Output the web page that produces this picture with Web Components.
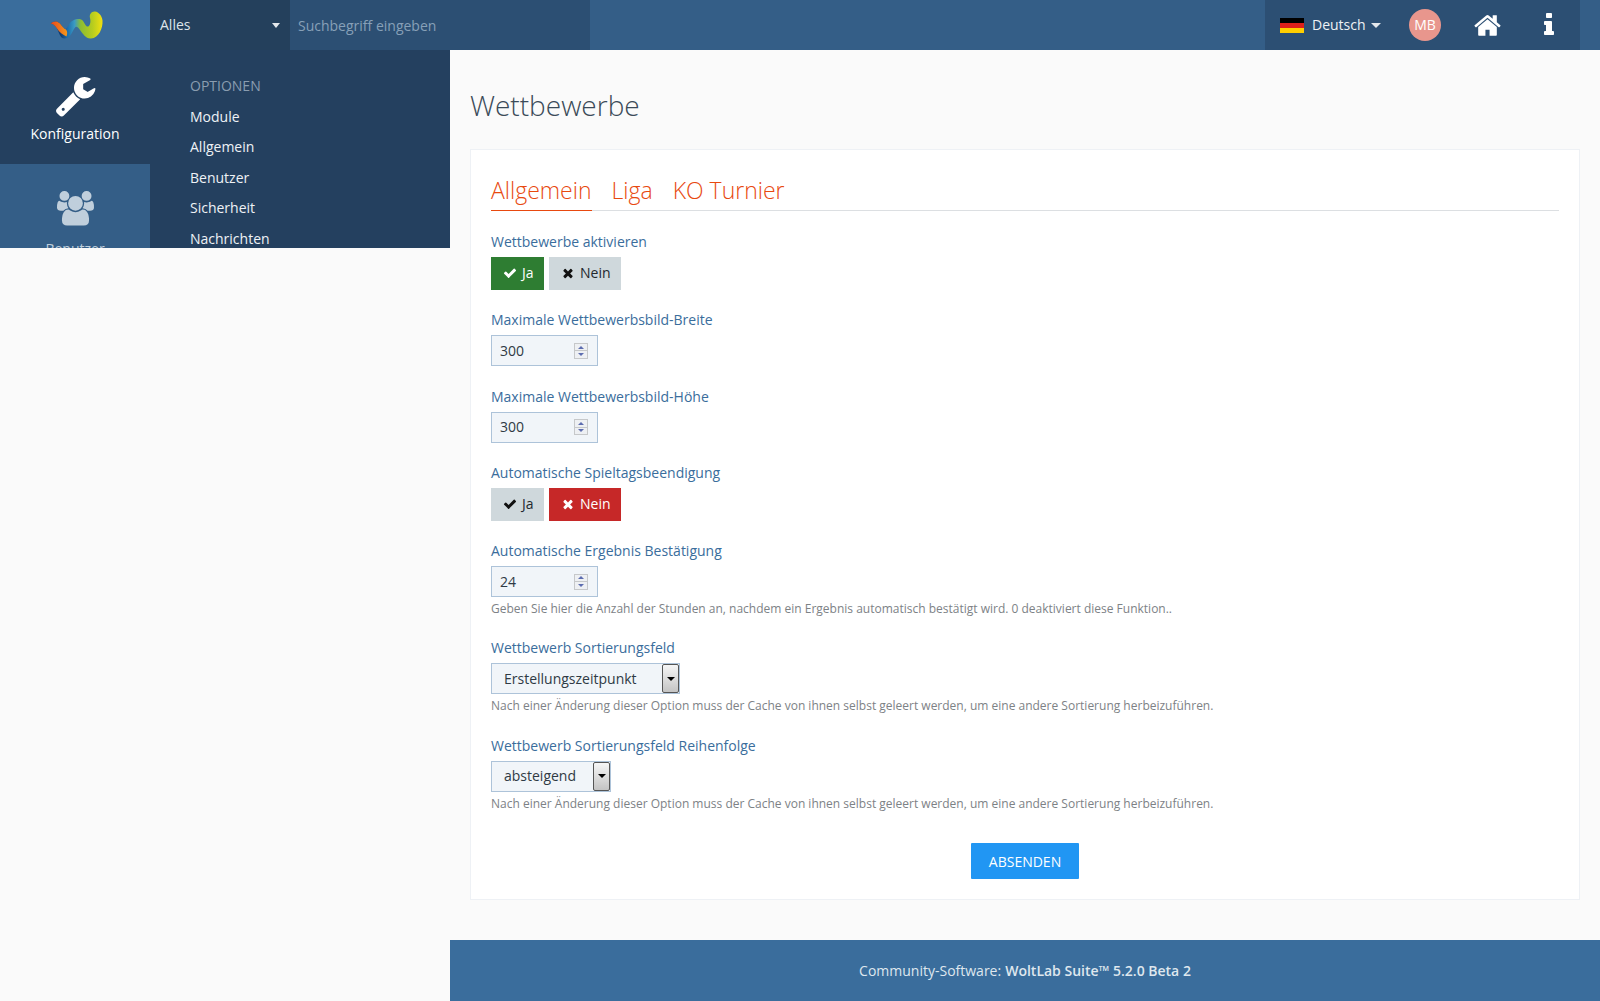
<!DOCTYPE html>
<html lang="de"><head><meta charset="utf-8"><title>Wettbewerbe</title>
<style>
html,body{margin:0;padding:0;background:#fafafa}
body{font:14px/20px "Open Sans","Liberation Sans",sans-serif;color:#3b4a58}
</style></head><body>
<acp-app>
  <acp-header slot="header"></acp-header>
  <acp-sidebar slot="sidebar"></acp-sidebar>
  <acp-title>Wettbewerbe</acp-title>
  <acp-section>
    <acp-tabs slot="tabs"></acp-tabs>
    <acp-field label="Wettbewerbe aktivieren"><acp-toggle value="yes"></acp-toggle></acp-field>
    <acp-field label="Maximale Wettbewerbsbild-Breite"><acp-number value="300"></acp-number></acp-field>
    <acp-field label="Maximale Wettbewerbsbild-Höhe"><acp-number value="300"></acp-number></acp-field>
    <acp-field label="Automatische Spieltagsbeendigung"><acp-toggle value="no"></acp-toggle></acp-field>
    <acp-field label="Automatische Ergebnis Bestätigung" help="Geben Sie hier die Anzahl der Stunden an, nachdem ein Ergebnis automatisch bestätigt wird. 0 deaktiviert diese Funktion.."><acp-number value="24"></acp-number></acp-field>
    <acp-field label="Wettbewerb Sortierungsfeld" help="Nach einer Änderung dieser Option muss der Cache von ihnen selbst geleert werden, um eine andere Sortierung herbeizuführen."><acp-select width="189" value="Erstellungszeitpunkt"></acp-select></acp-field>
    <acp-field label="Wettbewerb Sortierungsfeld Reihenfolge" help="Nach einer Änderung dieser Option muss der Cache von ihnen selbst geleert werden, um eine andere Sortierung herbeizuführen."><acp-select width="120" value="absteigend"></acp-select></acp-field>
    <acp-submit>ABSENDEN</acp-submit>
  </acp-section>
  <acp-footer slot="footer"></acp-footer>
</acp-app>
<script>
const P={
check:'M1671 566q0 40-28 68l-724 724-136 136q-28 28-68 28t-68-28l-136-136-362-362q-28-28-28-68t28-68l136-136q28-28 68-28t68 28l294 295 656-657q28-28 68-28t68 28l136 136q28 28 28 68z',
times:'M1490 1322q0 40-28 68l-136 136q-28 28-68 28t-68-28l-294-294-294 294q-28 28-68 28t-68-28l-136-136q-28-28-28-68t28-68l294-294-294-294q-28-28-28-68t28-68l136-136q28-28 68-28t68 28l294 294 294-294q28-28 68-28t68 28l136 136q28 28 28 68t-28 68l-294 294 294 294q28 28 28 68z',
home:'M1472 992v480q0 26-19 45t-45 19h-384v-384h-256v384h-384q-26 0-45-19t-19-45v-480q0-1 .5-3t.5-3l575-474 575 474q1 2 1 6zm223-69l-62 74q-8 9-21 11h-3q-13 0-21-7l-692-577-692 577q-12 8-24 7-13-2-21-11l-62-74q-8-10-7-23.500t11-21.500l719-599q32-26 76-26t76 26l244 204v-195q0-14 9-23t23-9h192q14 0 23 9t9 23v408l219 182q10 8 11 21.500t-7 23.500z',
info:'M1216 1344v128q0 26-19 45t-45 19h-512q-26 0-45-19t-19-45v-128q0-26 19-45t45-19h64v-384h-64q-26 0-45-19t-19-45v-128q0-26 19-45t45-19h384q26 0 45 19t19 45v576h64q26 0 45 19t19 45zm-128-1152v192q0 26-19 45t-45 19h-256q-26 0-45-19t-19-45v-192q0-26 19-45t45-19h256q26 0 45 19t19 45z',
wrench:'M448 1472q0-26-19-45t-45-19-45 19-19 45 19 45 45 19 45-19 19-45zm644-420l-682 682q-37 37-90 37-52 0-91-37l-106-108q-38-36-38-90 0-53 38-91l681-681q39 98 114.500 173.500t173.500 114.500zm634-435q0 39-23 106-47 134-164.500 217.500t-258.500 83.500q-185 0-316.500-131.500t-131.500-316.500 131.500-316.500 316.500-131.500q58 0 121.500 16.500t107.500 46.500q16 11 16 28t-16 28l-293 169v224l193 107q5-3 79-48.500t135.500-81 70.500-35.500q15 0 23.500 10t8.500 25z',
users:'M593 896q-162 5-265 128h-134q-82 0-138-40.500t-56-118.500q0-353 124-353 6 0 43.500 21t97.500 42.500 119 21.500q67 0 133-23-5 37-5 66 0 139 81 256zm1071 637q0 120-73 189.500t-194 69.500h-874q-121 0-194-69.500t-73-189.500q0-53 3.500-103.500t14-109 26.500-108.500 43-97.500 62-81 85.500-53.500 111.500-20q10 0 43 21.500t73 48 107 48 135 21.500 135-21.500 107-48 73-48 43-21.500q61 0 111.500 20t85.500 53.500 62 81 43 97.500 26.500 108.500 14 109 3.500 103.500zm-1024-1277q0 106-75 181t-181 75-181-75-75-181 75-181 181-75 181 75 75 181zm704 384q0 159-112.500 271.500t-271.500 112.500-271.500-112.500-112.500-271.500 112.500-271.500 271.500-112.500 271.500 112.500 112.500 271.500zm576 225q0 78-56 118.500t-138 40.500h-134q-103-123-265-128 81-117 81-256 0-29-5-66 66 23 133 23 59 0 119-21.500t97.500-42.500 43.500-21q124 0 124 353zm-128-609q0 106-75 181t-181 75-181-75-75-181 75-181 181-75 181 75 75 181z'};
const icon=(n,s)=>`<svg width="${s}" height="${s}" viewBox="0 0 1792 1792" fill="currentColor" style="display:block"><path d="${P[n]}"/></svg>`;
function def(name,render){customElements.define(name,class extends HTMLElement{connectedCallback(){if(this.shadowRoot)return;const r=this.attachShadow({mode:'open'});r.innerHTML=render(this)}})}

def('acp-app',()=>`<style>
:host{display:grid;grid-template-columns:450px 1fr;grid-template-rows:50px 1fr;height:1001px;width:1600px;overflow:hidden}
::slotted([slot=header]){grid-column:1/3}
.main{display:flex;flex-direction:column;min-width:0}
.content{flex:1;padding:36px 20px 0}
</style><slot name="header"></slot><slot name="sidebar"></slot>
<div class="main"><div class="content"><slot></slot></div><slot name="footer"></slot></div>`);

def('acp-header',()=>`<style>
:host{display:flex;height:50px;background:#345e87;color:#fff}
.logo{width:150px;box-sizing:border-box;padding-left:4px;background:#3a6d9c;display:flex;align-items:center;justify-content:center}
.scope{width:140px;box-sizing:border-box;padding:0 10px;background:#24405c;display:flex;align-items:center;justify-content:space-between;color:#dfe5ea}
.caret{width:0;height:0;border:4.5px solid transparent;border-top:5px solid #e4e8ec;border-bottom:0}
.lang .caret{border-width:5px 5px 0}
.search{width:300px;box-sizing:border-box;padding:1px 8px 0;background:#2c4f73;color:#87a0b8;display:flex;align-items:center}
.sp{flex:1}
.right{width:315px;background:#2c4f73;display:flex;align-items:center;margin-right:20px;box-sizing:border-box;padding-left:15px}
.flag{width:24px;height:15px;background:linear-gradient(#000 33.3%,#dd1f1a 33.3% 66.6%,#ffce00 66.6%);margin-right:8px}
.lang{display:flex;align-items:center;gap:5px;color:#eef2f5;width:82px}
.av{width:32px;height:32px;border-radius:50%;background:#e8968d;display:flex;align-items:center;justify-content:center;margin-left:15px;color:#fff;font-size:14px}
.home{margin-left:32px}.info{margin-left:33px}
</style>
<div class="logo"><svg width="54" height="30" viewBox="0 0 54 30"><defs>
<linearGradient id="g" x1="0" x2="1" y1="0" y2="0"><stop offset=".2" stop-color="#123d72"/><stop offset=".32" stop-color="#1d6cab"/><stop offset=".46" stop-color="#3a9ac4"/><stop offset=".58" stop-color="#8cbc32"/><stop offset=".8" stop-color="#b5cc1f"/><stop offset="1" stop-color="#f0e011"/></linearGradient>
<linearGradient id="o" x1="0" x2="1" y1="0" y2="0"><stop offset="0" stop-color="#e8481c"/><stop offset="1" stop-color="#f5981c"/></linearGradient></defs>
<path fill="url(#g)" d="M.7 13.500C3 11 7 10.500 10 13.500C12 16 14 19 15.500 19C18 18 19 12 23 10.500C27 8.500 31 8.500 33 11C35 14 36 17 38 16.500C40 16 41 12 40 8C39 4 42 1 45 1.500C49 2 52 6 52.500 10.500C53 18 49 28 41 28.500C36 29 33 24 30 20C28 17 26 16 25 17.500C22 21 21 28 15 28.500C10 29 9 22 7 18.500C5 15.500 3 14 .7 13.500Z"/>
<path fill="url(#o)" d="M.7 13.500C3 11 7 10.500 10 13.500C12 16 14 19 16 19.500C17.500 21 17.500 24 16.500 26.500C13 25 9 22 7 18.500C5 15.500 3 14 .7 13.500Z"/></svg></div>
<div class="scope"><span>Alles</span><span class="caret"></span></div>
<div class="search">Suchbegriff eingeben</div><div class="sp"></div>
<div class="right"><span class="flag"></span><span class="lang">Deutsch<span class="caret"></span></span>
<span class="av">MB</span><span class="home">${icon('home',29)}</span><span class="info">${icon('info',28)}</span></div>`);

def('acp-sidebar',()=>`<style>
:host{display:flex;height:198px;width:450px;overflow:hidden;background:#24405f;color:#fff}
.rail{width:150px;flex:none;background:#345e87}
.it{height:114px;box-sizing:border-box;display:flex;flex-direction:column;align-items:center;padding-top:24px;color:#c0cfdc}
.it.on{background:#24405f;color:#fff}
.it span{margin-top:7px;display:block}
.menu{padding:25.700px 0 0 40px;flex:1}
.menu div{height:30.6px;line-height:30px;color:#eef2f6}
.menu .h{height:20px;line-height:20px;margin-bottom:6px;color:#8a9db0;text-transform:uppercase}
</style><div class="rail"><div class="it on">${icon('wrench',43)}<span>Konfiguration</span></div>
<div class="it" style="padding-top:27px"><svg width="37" height="34.500" viewBox="0 0 1920 1792" fill="currentColor" style="display:block"><path d="${P.users}"/></svg><span style="margin-top:13px">Benutzer</span></div></div>
<div class="menu"><div class="h">Optionen</div><div>Module</div><div>Allgemein</div><div>Benutzer</div><div>Sicherheit</div><div>Nachrichten</div></div>`);

def('acp-title',()=>`<style>:host{display:block;font-size:28px;line-height:38px;font-weight:300;color:#3b4a58;margin-bottom:25px}</style><slot></slot>`);

def('acp-section',()=>`<style>:host{display:block;background:#fff;border:1px solid #eef1f5;padding:20px}</style><slot name="tabs"></slot><slot></slot>`);

def('acp-tabs',()=>`<style>
:host{display:flex;gap:20px;border-bottom:1px solid #dcdfe2;font-size:23px;line-height:40px;font-weight:300;color:#e8490f;margin-bottom:21.300px;height:40px}
span{display:block;height:41px;box-sizing:border-box}.on{border-bottom:1px solid #e8490f}
</style><span class="on">Allgemein</span><span>Liga</span><span>KO Turnier</span>`);

def('acp-field',h=>`<style>
:host{display:block;margin-bottom:20.4px}
label{display:block;color:#3a6d9c;margin-bottom:5px}
.help{font-size:12px;line-height:18px;color:#7d8286;margin-top:3px}
</style><label>${h.getAttribute('label')}</label><slot></slot>${h.hasAttribute('help')?`<div class="help">${h.getAttribute('help')}</div>`:''}`);

def('acp-toggle',h=>{const y=h.getAttribute('value')==='yes';return `<style>
:host{display:flex;gap:5px;height:32.6px}
span{display:flex;align-items:center;background:#cfd8dc;color:#23282e;box-sizing:border-box;height:32.6px;padding-bottom:1px}
svg{color:#111}
.a{width:53px;padding-left:12px;gap:5px}.b{width:72px;padding-left:12px;gap:5px}
.y{background:#2e7d32;color:#fff}.n{background:#c62828;color:#fff}
.y svg,.n svg{color:#fff}
</style><span class="a ${y?'y':''}">${icon('check',14)}Ja</span><span class="b ${y?'':'n'}">${icon('times',14)}Nein</span>`});

const box=`align-items:center;box-sizing:border-box;background:#f1f5f9;border:1px solid #adc3d9;color:#2f3a44;height:31px`;
def('acp-number',h=>`<style>
:host{${box};display:flex;width:107px;padding-left:8px}
.s{margin-left:auto;margin-right:9px;width:14px;height:16px;background:#c6c8ca;box-sizing:border-box;display:flex;flex-direction:column;gap:1px;padding:1px}
.s b{flex:1;background:#eef0f3;display:flex;align-items:center;justify-content:center}
i{display:block;width:0;height:0;border:3.500px solid transparent}
.u{border-bottom:3.500px solid #5d6db0;border-top:0}.d{border-top:3.500px solid #5d6db0;border-bottom:0}
</style>${h.getAttribute('value')}<span class="s"><b><i class="u"></i></b><b><i class="d"></i></b></span>`);

def('acp-select',h=>`<style>
:host{${box};display:flex;width:${h.getAttribute('width')}px;padding-left:12px}
.b{margin-left:auto;width:17px;height:29px;box-sizing:border-box;border:1px solid #555;border-radius:2px;background:linear-gradient(#f6f6f6,#c4c4c4);display:flex;align-items:center;justify-content:center}
i{display:block;width:0;height:0;border:4px solid transparent;border-top:4px solid #000;border-bottom:0}
</style>${h.getAttribute('value')}<span class="b"><i></i></span>`);

def('acp-submit',()=>`<style>
:host{display:flex;justify-content:center;margin-top:30px}
span{display:block;width:108px;height:36px;box-sizing:border-box;background:#2196f3;color:#fff;text-align:center;line-height:37px;border-radius:1px}
</style><span><slot></slot></span>`);

def('acp-footer',()=>`<style>
:host{display:flex;align-items:center;justify-content:center;height:61px;background:#3a6d9c;color:#dfe7ee;margin-top:40px}
b{font-weight:600;margin-left:4px}
</style>Community-Software: <b>WoltLab Suite™ 5.2.0 Beta 2</b>`);
</script></body></html>
